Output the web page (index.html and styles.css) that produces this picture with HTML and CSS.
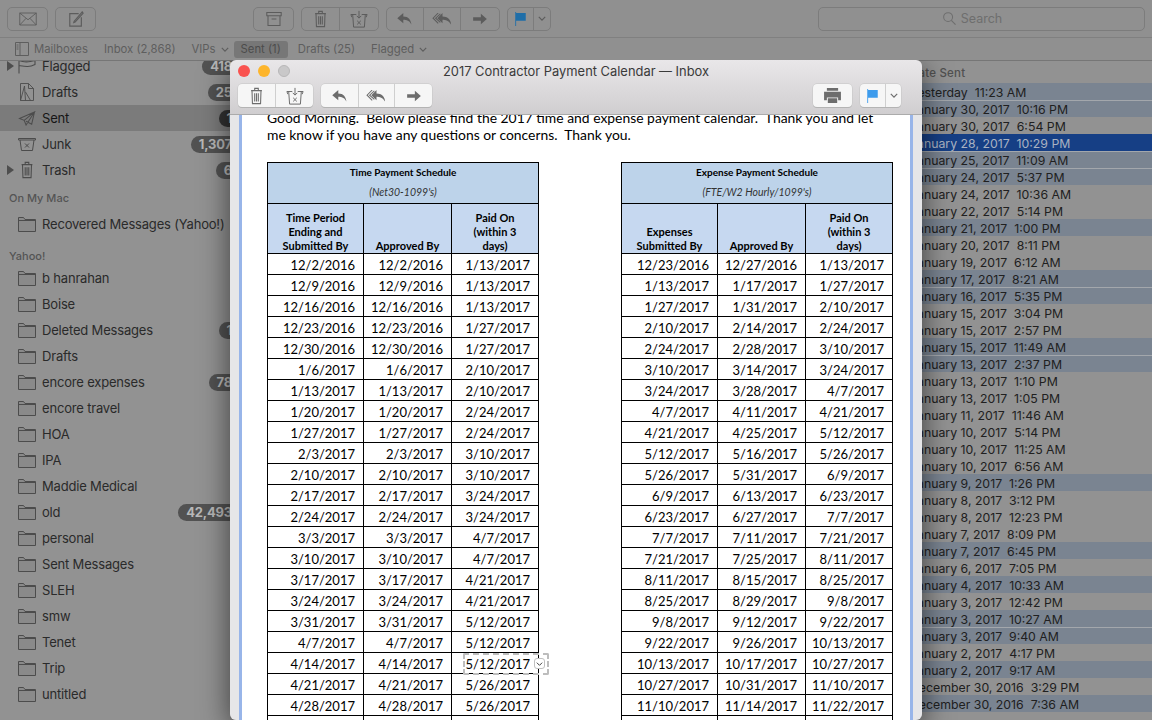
FILE: index.html
```html
<!DOCTYPE html>
<html lang="en">

<head>
    <meta charset="UTF-8">
    <title>Mail</title>
    <link rel="stylesheet" href="styles.css">
</head>

<body>
    <svg class="defs">
        <symbol id="i-mail" viewBox="0 0 24 18"><path d="M1 1h22v16H1zM1 1l11 9 11-9M1 17l8.500-9M23 17l-8.500-9" fill="none" stroke="currentColor" stroke-width="1.200"/></symbol>
        <symbol id="i-compose" viewBox="0 0 18 18"><path d="M12 3H2v14h13V7M7 11.500l-.5 1.500 1.500-.5L17 2.500 16 1z" fill="none" stroke="currentColor" stroke-width="1.300"/></symbol>
        <symbol id="i-archive" viewBox="0 0 20 18"><path d="M1 1h18v4H1zM2.500 5v12h15V5M7 9h6" fill="none" stroke="currentColor" stroke-width="1.300"/></symbol>
        <symbol id="i-trash" viewBox="0 0 14 20"><path d="M1 4h12M5 4V1.500h4V4M2 4l.5 14.500h9L12 4M5 7v9M7 7v9M9 7v9" fill="none" stroke="currentColor" stroke-width="1.200"/></symbol>
        <symbol id="i-junk" viewBox="0 0 20 20"><path d="M1 5h6M13 5h6M3 5l1 14h12l1-14M1 5l1 3M19 5l-1 3M10 1v8M7.500 6.500L10 9l2.500-2.500M8 12l4 4M12 12l-4 4" fill="none" stroke="currentColor" stroke-width="1.100"/></symbol>
        <symbol id="i-reply" viewBox="0 0 18 14"><path d="M7 0L0 6l7 6V8c4 0 7 1 9.500 5.500C16 8 13 4 7 4z" fill="currentColor"/></symbol>
        <symbol id="i-replyall" viewBox="0 0 24 14"><path d="M12 0L6 6l6 6V8c4 0 7 1 10 5.500C22 8 18 4 12 4z" fill="currentColor"/><path d="M7 0L1 6l6 6M9.500 1L4 6l5.500 5" fill="none" stroke="currentColor" stroke-width="1.200"/></symbol>
        <symbol id="i-forward" viewBox="0 0 18 14"><path d="M10 1l7 6-7 6V9H1V5h9z" fill="currentColor"/></symbol>
        <symbol id="i-flag" viewBox="0 0 14 16"><path d="M1 0h1v1h11v9H2v6H1z" fill="currentColor"/></symbol>
        <symbol id="i-chevron" viewBox="0 0 10 6"><path d="M1 1l4 4 4-4" fill="none" stroke="currentColor" stroke-width="1.500"/></symbol>
        <symbol id="i-print" viewBox="0 0 20 16"><path d="M4 0h12v3H4zM1 4h18v9h-3v-3H4v3H1zM5 11h10v5H5z" fill="currentColor"/></symbol>
        <symbol id="i-search" viewBox="0 0 14 14"><circle cx="5.500" cy="5.500" r="4.800" fill="none" stroke="currentColor" stroke-width="1.100"/><path d="M9 9l4.500 4.500" stroke="currentColor" stroke-width="1.200"/></symbol>
        <symbol id="i-panel" viewBox="0 0 14 14"><path d="M.5.5h13v13H.5zM5 .5v13M1.500 3h2M1.500 5h2M1.500 7h2" fill="none" stroke="currentColor"/></symbol>
        <symbol id="i-sflag" viewBox="0 0 18 14"><path d="M1 0v14M1 1c5 2 9 2 16 0v4c-6 3-10 2-16 1" fill="none" stroke="currentColor" stroke-width="1.100"/></symbol>
        <symbol id="i-draft" viewBox="0 0 15 18"><path d="M1 .5h8l5 5v12H1zM9 .5v5h5M1 17.500L5 3l1 14.500M6 9l5 8.500" fill="none" stroke="currentColor" stroke-width=".9"/></symbol>
        <symbol id="i-sent" viewBox="0 0 18 16"><path d="M17 1L1 8l5 2 2 5zM17 1L6 10M17 1l-3 13-6-3" fill="none" stroke="currentColor" stroke-width="1.100"/></symbol>
        <symbol id="i-sjunk" viewBox="0 0 18 14"><path d="M.5 1h17v1.500H.5zM2 2.500L3.500 13h11L16 2.500M7 6l4 4M11 6l-4 4" fill="none" stroke="currentColor"/></symbol>
        <symbol id="i-folder" viewBox="0 0 18 15"><path d="M.5 14.500V.5h5l1.500 2h10.500v12zM.5 3.500h17" fill="#8a8a8a" stroke="#4c4c4c"/></symbol>
    </svg>

    <div class="app">
        <header class="toolbar">
            <div class="btn-group"><button class="tbtn w39"><svg class="ic-mail"><use href="#i-mail"/></svg></button></div>
            <div class="btn-group"><button class="tbtn w39"><svg class="ic-md"><use href="#i-compose"/></svg></button></div>
            <div class="btn-group push"><button class="tbtn w39"><svg class="ic-md"><use href="#i-archive"/></svg></button></div>
            <div class="btn-group">
                <button class="tbtn w38"><svg class="ic-tall"><use href="#i-trash"/></svg></button>
                <button class="tbtn w38"><svg class="ic-junk"><use href="#i-junk"/></svg></button>
            </div>
            <div class="btn-group">
                <button class="tbtn w37"><svg class="ic-arrow"><use href="#i-reply"/></svg></button>
                <button class="tbtn w37"><svg class="ic-arrow2"><use href="#i-replyall"/></svg></button>
                <button class="tbtn w38"><svg class="ic-arrow"><use href="#i-forward"/></svg></button>
            </div>
            <div class="btn-group">
                <button class="tbtn w26"><svg class="ic-flag dim-blue"><use href="#i-flag"/></svg></button>
                <button class="tbtn w16"><svg class="ic-chev"><use href="#i-chevron"/></svg></button>
            </div>
            <div class="search"><svg class="ic-search"><use href="#i-search"/></svg><span>Search</span></div>
        </header>

        <nav class="favbar">
            <span class="fav fav-first"><svg class="ic-panel"><use href="#i-panel"/></svg>Mailboxes</span>
            <span class="fav">Inbox (2,868)</span>
            <span class="fav">VIPs <svg class="ic-favchev"><use href="#i-chevron"/></svg></span>
            <span class="fav fav-active">Sent (1)</span>
            <span class="fav">Drafts (25)</span>
            <span class="fav">Flagged <svg class="ic-favchev"><use href="#i-chevron"/></svg></span>
        </nav>

        <div class="columns">
            <aside class="sidebar">
                <div class="side-scroll">
                    <div class="mbox"><i class="tri"></i><svg class="ic-side"><use href="#i-sflag"/></svg><span class="name">Flagged</span><b class="count">418</b></div>
                    <div class="mbox"><svg class="ic-side side-tall"><use href="#i-draft"/></svg><span class="name">Drafts</span><b class="count">25</b></div>
                    <div class="mbox mbox-sel"><svg class="ic-side"><use href="#i-sent"/></svg><span class="name">Sent</span><b class="count">1</b></div>
                    <div class="mbox"><svg class="ic-side"><use href="#i-sjunk"/></svg><span class="name">Junk</span><b class="count">1,307</b></div>
                    <div class="mbox"><i class="tri"></i><svg class="ic-side side-tall"><use href="#i-trash"/></svg><span class="name">Trash</span><b class="count">6</b></div>
                    <div class="side-head head-mac">On My Mac</div>
                    <div class="mbox"><svg class="ic-side"><use href="#i-folder"/></svg><span class="name">Recovered Messages (Yahoo!)</span></div>
                    <div class="side-head head-yahoo">Yahoo!</div>
                    <div class="mbox"><svg class="ic-side"><use href="#i-folder"/></svg><span class="name">b hanrahan</span></div>
                    <div class="mbox"><svg class="ic-side"><use href="#i-folder"/></svg><span class="name">Boise</span></div>
                    <div class="mbox"><svg class="ic-side"><use href="#i-folder"/></svg><span class="name">Deleted Messages</span><b class="count">1</b></div>
                    <div class="mbox"><svg class="ic-side"><use href="#i-folder"/></svg><span class="name">Drafts</span></div>
                    <div class="mbox"><svg class="ic-side"><use href="#i-folder"/></svg><span class="name">encore expenses</span><b class="count">78</b></div>
                    <div class="mbox"><svg class="ic-side"><use href="#i-folder"/></svg><span class="name">encore travel</span></div>
                    <div class="mbox"><svg class="ic-side"><use href="#i-folder"/></svg><span class="name">HOA</span></div>
                    <div class="mbox"><svg class="ic-side"><use href="#i-folder"/></svg><span class="name">IPA</span></div>
                    <div class="mbox"><svg class="ic-side"><use href="#i-folder"/></svg><span class="name">Maddie Medical</span></div>
                    <div class="mbox"><svg class="ic-side"><use href="#i-folder"/></svg><span class="name">old</span><b class="count">42,493</b></div>
                    <div class="mbox"><svg class="ic-side"><use href="#i-folder"/></svg><span class="name">personal</span></div>
                    <div class="mbox"><svg class="ic-side"><use href="#i-folder"/></svg><span class="name">Sent Messages</span></div>
                    <div class="mbox"><svg class="ic-side"><use href="#i-folder"/></svg><span class="name">SLEH</span></div>
                    <div class="mbox"><svg class="ic-side"><use href="#i-folder"/></svg><span class="name">smw</span></div>
                    <div class="mbox"><svg class="ic-side"><use href="#i-folder"/></svg><span class="name">Tenet</span></div>
                    <div class="mbox"><svg class="ic-side"><use href="#i-folder"/></svg><span class="name">Trip</span></div>
                    <div class="mbox"><svg class="ic-side"><use href="#i-folder"/></svg><span class="name">untitled</span></div>
                </div>
            </aside>

            <section class="list">
                <div class="list-head">Date Sent</div>
                <div class="row unread">Yesterday  11:23 AM</div>
                <div class="row unread">January 30, 2017  10:16 PM</div>
                <div class="row">January 30, 2017  6:54 PM</div>
                <div class="row unread selected">January 28, 2017  10:29 PM</div>
                <div class="row unread">January 25, 2017  11:09 AM</div>
                <div class="row unread">January 24, 2017  5:37 PM</div>
                <div class="row">January 24, 2017  10:36 AM</div>
                <div class="row">January 22, 2017  5:14 PM</div>
                <div class="row unread">January 21, 2017  1:00 PM</div>
                <div class="row">January 20, 2017  8:11 PM</div>
                <div class="row">January 19, 2017  6:12 AM</div>
                <div class="row unread">January 17, 2017  8:21 AM</div>
                <div class="row unread">January 16, 2017  5:35 PM</div>
                <div class="row">January 15, 2017  3:04 PM</div>
                <div class="row">January 15, 2017  2:57 PM</div>
                <div class="row unread">January 15, 2017  11:49 AM</div>
                <div class="row unread">January 13, 2017  2:37 PM</div>
                <div class="row">January 13, 2017  1:10 PM</div>
                <div class="row">January 13, 2017  1:05 PM</div>
                <div class="row">January 11, 2017  11:46 AM</div>
                <div class="row">January 10, 2017  5:14 PM</div>
                <div class="row">January 10, 2017  11:25 AM</div>
                <div class="row">January 10, 2017  6:56 AM</div>
                <div class="row unread">January 9, 2017  1:26 PM</div>
                <div class="row">January 8, 2017  3:12 PM</div>
                <div class="row">January 8, 2017  12:23 PM</div>
                <div class="row">January 7, 2017  8:09 PM</div>
                <div class="row unread">January 7, 2017  6:45 PM</div>
                <div class="row">January 6, 2017  7:05 PM</div>
                <div class="row unread">January 4, 2017  10:33 AM</div>
                <div class="row">January 3, 2017  12:42 PM</div>
                <div class="row unread">January 3, 2017  10:27 AM</div>
                <div class="row unread">January 3, 2017  9:40 AM</div>
                <div class="row">January 2, 2017  4:17 PM</div>
                <div class="row unread">January 2, 2017  9:17 AM</div>
                <div class="row">December 30, 2016  3:29 PM</div>
                <div class="row unread">December 30, 2016  7:36 AM</div>
            </section>
        </div>
    </div>

    <div class="msg-window">
        <div class="msg-titlebar">
            <div class="lights"><i class="light red"></i><i class="light yellow"></i><i class="light off"></i></div>
            <div class="msg-title">2017 Contractor Payment Calendar — Inbox</div>
            <div class="msg-tools">
                <div class="mbtn-group">
                    <button class="mbtn w38"><svg class="ic-tall"><use href="#i-trash"/></svg></button>
                    <button class="mbtn w37"><svg class="ic-junk"><use href="#i-junk"/></svg></button>
                </div>
                <div class="mbtn-group">
                    <button class="mbtn w38"><svg class="ic-arrow"><use href="#i-reply"/></svg></button>
                    <button class="mbtn w36"><svg class="ic-arrow2"><use href="#i-replyall"/></svg></button>
                    <button class="mbtn w37"><svg class="ic-arrow"><use href="#i-forward"/></svg></button>
                </div>
                <div class="mbtn-group tools-right">
                    <button class="mbtn w39"><svg class="ic-print"><use href="#i-print"/></svg></button>
                </div>
                <div class="mbtn-group">
                    <button class="mbtn w26"><svg class="ic-flag flag-blue"><use href="#i-flag"/></svg></button>
                    <button class="mbtn w15"><svg class="ic-chev"><use href="#i-chevron"/></svg></button>
                </div>
            </div>
        </div>
        <div class="msg-body">
            <div class="msg-page">
                <p class="greeting">Good Morning.  Below please find the 2017 time and expense payment calendar.  Thank you and let<br>me know if you have any questions or concerns.  Thank you.</p>
                <div class="tables">
                    <table class="pay">
                        <colgroup><col class="c1"><col class="c2"><col class="c3"></colgroup>
                        <tr class="title-row"><th colspan="3">Time Payment Schedule<em>(Net30-1099's)</em></th></tr>
                        <tr class="head-row"><th>Time Period Ending and Submitted By</th><th>Approved By</th><th>Paid On<br>(within 3<br>days)</th></tr>
                        <tr><td>12/2/2016</td><td>12/2/2016</td><td>1/13/2017</td></tr>
                        <tr><td>12/9/2016</td><td>12/9/2016</td><td>1/13/2017</td></tr>
                        <tr><td>12/16/2016</td><td>12/16/2016</td><td>1/13/2017</td></tr>
                        <tr><td>12/23/2016</td><td>12/23/2016</td><td>1/27/2017</td></tr>
                        <tr><td>12/30/2016</td><td>12/30/2016</td><td>1/27/2017</td></tr>
                        <tr><td>1/6/2017</td><td>1/6/2017</td><td>2/10/2017</td></tr>
                        <tr><td>1/13/2017</td><td>1/13/2017</td><td>2/10/2017</td></tr>
                        <tr><td>1/20/2017</td><td>1/20/2017</td><td>2/24/2017</td></tr>
                        <tr><td>1/27/2017</td><td>1/27/2017</td><td>2/24/2017</td></tr>
                        <tr><td>2/3/2017</td><td>2/3/2017</td><td>3/10/2017</td></tr>
                        <tr><td>2/10/2017</td><td>2/10/2017</td><td>3/10/2017</td></tr>
                        <tr><td>2/17/2017</td><td>2/17/2017</td><td>3/24/2017</td></tr>
                        <tr><td>2/24/2017</td><td>2/24/2017</td><td>3/24/2017</td></tr>
                        <tr><td>3/3/2017</td><td>3/3/2017</td><td>4/7/2017</td></tr>
                        <tr><td>3/10/2017</td><td>3/10/2017</td><td>4/7/2017</td></tr>
                        <tr><td>3/17/2017</td><td>3/17/2017</td><td>4/21/2017</td></tr>
                        <tr><td>3/24/2017</td><td>3/24/2017</td><td>4/21/2017</td></tr>
                        <tr><td>3/31/2017</td><td>3/31/2017</td><td>5/12/2017</td></tr>
                        <tr><td>4/7/2017</td><td>4/7/2017</td><td>5/12/2017</td></tr>
                        <tr><td>4/14/2017</td><td>4/14/2017</td><td>5/12/2017</td></tr>
                        <tr><td>4/21/2017</td><td>4/21/2017</td><td>5/26/2017</td></tr>
                        <tr><td>4/28/2017</td><td>4/28/2017</td><td>5/26/2017</td></tr>
                        <tr><td>5/5/2017</td><td>5/5/2017</td><td>6/9/2017</td></tr>
                    </table>
                    <table class="pay">
                        <colgroup><col class="c1"><col class="c2"><col class="c3"></colgroup>
                        <tr class="title-row"><th colspan="3">Expense Payment Schedule<em>(FTE/W2 Hourly/1099's)</em></th></tr>
                        <tr class="head-row"><th>Expenses Submitted By</th><th>Approved By</th><th>Paid On<br>(within 3<br>days)</th></tr>
                        <tr><td>12/23/2016</td><td>12/27/2016</td><td>1/13/2017</td></tr>
                        <tr><td>1/13/2017</td><td>1/17/2017</td><td>1/27/2017</td></tr>
                        <tr><td>1/27/2017</td><td>1/31/2017</td><td>2/10/2017</td></tr>
                        <tr><td>2/10/2017</td><td>2/14/2017</td><td>2/24/2017</td></tr>
                        <tr><td>2/24/2017</td><td>2/28/2017</td><td>3/10/2017</td></tr>
                        <tr><td>3/10/2017</td><td>3/14/2017</td><td>3/24/2017</td></tr>
                        <tr><td>3/24/2017</td><td>3/28/2017</td><td>4/7/2017</td></tr>
                        <tr><td>4/7/2017</td><td>4/11/2017</td><td>4/21/2017</td></tr>
                        <tr><td>4/21/2017</td><td>4/25/2017</td><td>5/12/2017</td></tr>
                        <tr><td>5/12/2017</td><td>5/16/2017</td><td>5/26/2017</td></tr>
                        <tr><td>5/26/2017</td><td>5/31/2017</td><td>6/9/2017</td></tr>
                        <tr><td>6/9/2017</td><td>6/13/2017</td><td>6/23/2017</td></tr>
                        <tr><td>6/23/2017</td><td>6/27/2017</td><td>7/7/2017</td></tr>
                        <tr><td>7/7/2017</td><td>7/11/2017</td><td>7/21/2017</td></tr>
                        <tr><td>7/21/2017</td><td>7/25/2017</td><td>8/11/2017</td></tr>
                        <tr><td>8/11/2017</td><td>8/15/2017</td><td>8/25/2017</td></tr>
                        <tr><td>8/25/2017</td><td>8/29/2017</td><td>9/8/2017</td></tr>
                        <tr><td>9/8/2017</td><td>9/12/2017</td><td>9/22/2017</td></tr>
                        <tr><td>9/22/2017</td><td>9/26/2017</td><td>10/13/2017</td></tr>
                        <tr><td>10/13/2017</td><td>10/17/2017</td><td>10/27/2017</td></tr>
                        <tr><td>10/27/2017</td><td>10/31/2017</td><td>11/10/2017</td></tr>
                        <tr><td>11/10/2017</td><td>11/14/2017</td><td>11/22/2017</td></tr>
                        <tr><td>11/24/2017</td><td>11/28/2017</td><td>12/8/2017</td></tr>
                    </table>
                </div>
            </div>
            <div class="detect-box"><span class="detect-btn"><svg class="ic-detect"><use href="#i-chevron"/></svg></span></div>
        </div>
    </div>
</body>

</html>
```

FILE: styles.css
```css
* {
    box-sizing: border-box;
}

html,
body {
    margin: 0;
    height: 720px;
    overflow: hidden;
}

body {
    position: relative;
    width: 1152px;
    background-color: #929292;
    font-family: "Inter", "Liberation Sans", sans-serif;
    font-size: 13px;
    color: #2a2a2a;
}

.defs {
    display: none;
}

svg {
    display: block;
}

button {
    display: flex;
    align-items: center;
    justify-content: center;
    padding: 0;
    margin: 0;
    border: 0;
    background: none;
}

/* main window, dimmed behind the message */
.app {
    display: flex;
    flex-direction: column;
    height: 720px;
}

.toolbar {
    display: flex;
    align-items: center;
    gap: 7px;
    height: 38px;
    padding: 0 7px;
    border-bottom: 1px solid #808080;
    background-color: #909090;
}

.btn-group {
    display: flex;
    height: 24px;
    border: 1px solid #7c7c7c;
    border-radius: 5px;
    color: #5c5c5c;
}

.push {
    margin-left: 150px;
}

.tbtn {
    color: #5c5c5c;
    border-right: 1px solid #7c7c7c;
}

.tbtn:last-child {
    border-right: 0;
}

.w39 { width: 39px; }
.w38 { width: 38px; }
.w37 { width: 37px; }
.w36 { width: 36px; }
.w26 { width: 26px; }
.w16 { width: 16px; }
.w15 { width: 15px; }

.ic-mail { width: 18px; height: 14px; }
.ic-md { width: 16px; height: 16px; }
.ic-junk { width: 18px; height: 18px; }
.ic-tall { width: 13px; height: 18px; }
.ic-arrow { width: 16px; height: 12px; }
.ic-arrow2 { width: 21px; height: 12px; }
.ic-flag { width: 13px; height: 14px; }
.ic-chev { width: 8px; height: 5px; }
.ic-print { width: 19px; height: 15px; }
.ic-search { width: 13px; height: 13px; }
.ic-panel { width: 14px; height: 14px; margin-right: 5px; }
.ic-favchev { width: 8px; height: 5px; margin-left: 5px; }
.ic-side { width: 18px; height: 15px; flex: none; color: #4c4c4c; }
.side-tall { height: 18px; }
.ic-detect { width: 7px; height: 4px; }

.dim-blue { color: #1f6ea8; }
.flag-blue { color: #3d9bec; }

.search {
    display: flex;
    align-items: center;
    justify-content: center;
    gap: 5px;
    width: 327px;
    height: 24px;
    margin-left: auto;
    padding-right: 18px;
    border: 1px solid #7c7c7c;
    border-radius: 5px;
    font-size: 12.500px;
    color: #6e6e6e;
}

.favbar {
    display: flex;
    align-items: center;
    height: 23px;
    padding-left: 15px;
    border-bottom: 1px solid #767676;
    background-color: #909090;
    font-size: 11.300px;
    color: #5e5e5e;
}

.fav {
    display: flex;
    align-items: center;
    height: 17px;
    margin-right: 16px;
    white-space: nowrap;
}

.fav-active {
    margin: 0 10px 0 -11px;
    padding: 0 7px;
    border-radius: 3px;
    background-color: #777;
    color: #4c4c4c;
}

.columns {
    display: flex;
    flex: 1;
    min-height: 0;
}

/* mailbox list */
.sidebar {
    width: 240px;
    flex: none;
    overflow: hidden;
}

.side-scroll {
    margin-top: -8px;
}

.mbox {
    position: relative;
    display: flex;
    align-items: center;
    gap: 6px;
    height: 26px;
    padding: 0 0 0 18px;
    letter-spacing: -.18px;
}

.mbox-sel {
    background-color: #7b7b7b;
    color: #161616;
}

.name {
    flex: 1;
    white-space: nowrap;
}

.tri {
    position: absolute;
    left: 7px;
    top: 8px;
    border-left: 7px solid #4e4e4e;
    border-top: 5px solid transparent;
    border-bottom: 5px solid transparent;
}

.count {
    height: 17px;
    padding: 0 8px;
    border-radius: 9px;
    background-color: #525252;
    color: #b8b8b8;
    font-size: 13px;
    line-height: 17px;
}

.mbox-sel .count {
    background-color: #323232;
}

.side-head {
    font-size: 11px;
    font-weight: 500;
    color: #545454;
    padding-left: 9px;
}

.head-mac {
    height: 28px;
    padding-top: 8px;
}

.head-yahoo {
    height: 28px;
    padding-top: 12px;
}

/* message list, only the date column shows */
.list {
    flex: 1;
    padding-left: 670px;
}

.list-head {
    height: 22px;
    line-height: 24px;
    font-size: 11.500px;
    font-weight: 500;
    letter-spacing: .2px;
    color: #505050;
}

.row {
    height: 17px;
    border-top: 1px solid transparent;
    font-size: 12.300px;
    line-height: 18px;
    white-space: pre;
    color: #202020;
}

.unread {
    background-color: #7a8491;
}

.unread + .unread {
    border-top-color: #a3a7ac;
}

.selected {
    background-color: #163f85;
    color: #a9b2c2;
}

/* message window on top */
.msg-window {
    position: absolute;
    left: 230px;
    top: 60px;
    width: 692px;
    height: 660px;
    border-radius: 6px;
    overflow: hidden;
    display: flex;
    flex-direction: column;
    box-shadow: 0 8px 30px rgba(0, 0, 0, .6);
    clip-path: inset(0 -50px -50px -50px round 6px);
}

.msg-titlebar {
    position: relative;
    flex: none;
    height: 55px;
    border-bottom: 1px solid #ababab;
    background: linear-gradient(#e9e7e9, #d0ced0);
}

.lights {
    display: flex;
    gap: 8px;
    padding: 5px 0 0 8px;
}

.light {
    width: 12px;
    height: 12px;
    border-radius: 50%;
}

.red { background-color: #f9524f; }
.yellow { background-color: #fdb52c; }
.off { background-color: #c9c8c9; border: 1px solid #b8b7b8; }

.msg-title {
    position: absolute;
    left: 0;
    right: 0;
    top: 4px;
    text-align: center;
    font-size: 12.900px;
    line-height: 16px;
    color: #3a3a3a;
}

.msg-tools {
    display: flex;
    gap: 8px;
    padding: 7px 21px 0 8px;
}

.tools-right {
    margin-left: auto;
}

.mbtn-group {
    display: flex;
    height: 23px;
    border-radius: 4px;
    background-color: #f6f6f6;
    box-shadow: 0 1px 0 #b4b4b4, 0 0 0 .5px #c4c4c4;
}

.mbtn {
    border-right: 1px solid #cfcfcf;
    color: #6d6d6d;
}

.mbtn:last-child {
    border-right: 0;
}

.msg-body {
    position: relative;
    flex: 1;
    padding: 0 9px 0 9px;
    background-color: #e6e6e8;
    overflow: hidden;
}

.msg-page {
    height: 100%;
    padding: 0 0 0 25px;
    border-left: 3px solid #98b5e9;
    border-right: 3px solid #98b5e9;
    background-color: #fff;
    overflow: hidden;
}

/* calendar content, set in a Calibri-like face */
.greeting {
    margin: -6px 0 0;
    font-family: "Lato", "Liberation Sans", sans-serif;
    font-size: 13.900px;
    line-height: 17px;
    white-space: pre;
    color: #000;
}

.tables {
    display: flex;
    gap: 82px;
    margin-top: 19px;
}

.pay {
    width: 271px;
    flex: none;
    table-layout: fixed;
    border-collapse: collapse;
    font-family: "Lato", "Liberation Sans", sans-serif;
    color: #000;
}

.c1 { width: 96px; }
.c2 { width: 88px; }
.c3 { width: 87px; }

.pay th,
.pay td {
    border: 1px solid #000;
    padding: 0;
}

.title-row th {
    height: 41px;
    background-color: #bdd3ea;
    font-size: 10px;
    line-height: 19px;
    vertical-align: top;
}

.title-row em {
    display: block;
    margin-top: 1px;
    font-size: 10.500px;
    font-weight: 400;
    color: #333;
}

.head-row th {
    height: 50px;
    padding: 0 6px;
    background-color: #c6d8f0;
    font-size: 11px;
    line-height: 14px;
    vertical-align: bottom;
}

.pay td {
    height: 21px;
    padding: 2px 8px 0 0;
    text-align: right;
    font-size: 13px;
    line-height: 18px;
}

.detect-box {
    position: absolute;
    left: 233px;
    top: 538px;
    width: 86px;
    height: 22px;
    border: 2px dashed #bdbdbd;
    border-radius: 2px;
}

.detect-btn {
    position: absolute;
    right: 2px;
    top: 3px;
    display: flex;
    align-items: center;
    justify-content: center;
    width: 11px;
    height: 11px;
    border: 1px solid #c0c0c0;
    border-radius: 3px;
    background-color: #fff;
    color: #444;
}
```
